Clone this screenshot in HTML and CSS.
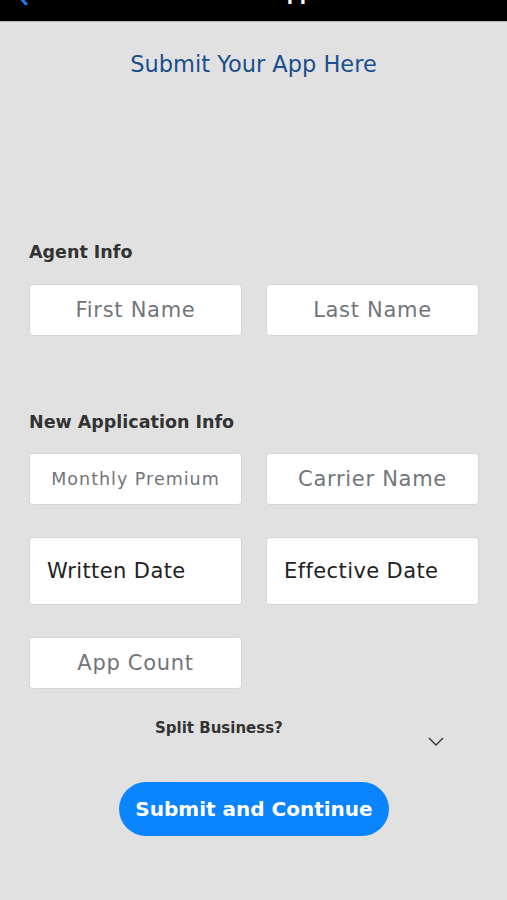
FILE: index.html
```html
<!DOCTYPE html>
<html lang="en">
<head>
  <meta charset="UTF-8">
  <meta name="viewport" content="width=device-width, initial-scale=1.0">
  <title>Submit App</title>
  <link rel="stylesheet" href="styles.css">
</head>
<body>

  <div class="topbar">
    <div class="topbar-left">
      <svg class="back-icon" width="14" height="24" viewBox="0 0 14 24">
        <path d="M12 2 L3 12 L12 22" fill="none" stroke="#1a7cf0" stroke-width="3" stroke-linecap="round" stroke-linejoin="round"/>
      </svg>
    </div>
    <div class="nav-title">Submit App</div>
    <div></div>
  </div>

  <h1 class="page-title">Submit Your App Here</h1>

  <form class="form" onsubmit="return false">
    <!-- agent -->
    <div class="section-label agent-label">Agent Info</div>
    <div class="row">
      <input class="field" type="text" placeholder="First Name">
      <input class="field" type="text" placeholder="Last Name">
    </div>

    <!-- application -->
    <div class="section-label app-label">New Application Info</div>
    <div class="row">
      <input class="field small" type="text" placeholder="Monthly Premium">
      <input class="field" type="text" placeholder="Carrier Name">
    </div>
    <div class="row">
      <div class="field date">Written Date</div>
      <div class="field date">Effective Date</div>
    </div>
    <div class="row">
      <input class="field" type="text" placeholder="App Count">
    </div>

    <div class="split">
      <span class="split-label">Split Business?</span>
      <svg class="chevron" width="16" height="9" viewBox="0 0 16 9">
        <path d="M1 1 L8 8 L15 1" fill="none" stroke="#333" stroke-width="1.4"/>
      </svg>
    </div>

    <button class="submit-btn" type="submit">Submit and Continue</button>
  </form>

</body>
</html>
```

FILE: styles.css
```css
body {
  margin: 0;
  background: #e1e1e1;
  font-family: 'DejaVu Sans', 'Liberation Sans', sans-serif;
  color: #333;
}

/* nav bar, only the bottom edge is on screen */
.topbar {
  height: 21px;
  background: #000;
  border-bottom: 1px solid #b4b4b4;
  overflow: hidden;
  display: grid;
  grid-template-columns: 1fr auto 1fr;
  align-items: start;
}

.back-icon {
  display: block;
  margin-left: 14px;
  margin-top: -18px;
}

.nav-title {
  color: #fff;
  font-size: 18px;
  font-weight: bold;
  line-height: 18px;
  margin-top: -15px;
}

.page-title {
  margin: 0;
  padding-top: 30px;
  font-size: 22.5px;
  line-height: 24px;
  font-weight: normal;
  text-align: center;
  color: #1b4f8c;
}

.form {
  padding: 0 28px 0 29px;
  display: flex;
  flex-direction: column;
}

.section-label {
  font-size: 17.5px;
  line-height: 20px;
  font-weight: bold;
  color: #333;
}

.agent-label {
  margin-top: 166px;
}

.app-label {
  margin-top: 76px;
}

.row {
  display: grid;
  grid-template-columns: 1fr 1fr;
  gap: 24px;
  margin-top: 32px;
}

.agent-label + .row {
  margin-top: 22px;
}

.app-label + .row {
  margin-top: 21px;
}

.field {
  box-sizing: border-box;
  height: 52px;
  width: 100%;
  background: #fff;
  border: 1px solid #d6d6d6;
  border-radius: 4px;
  font-family: inherit;
  font-size: 21px;
  letter-spacing: 0.7px;
  text-align: center;
  color: #222;
  outline: none;
}

.field::placeholder {
  color: #72757a;
}

.field.small {
  font-size: 17.5px;
  letter-spacing: 1px;
}

.field.date {
  height: 68px;
  display: flex;
  align-items: center;
  padding-left: 17px;
  font-size: 21px;
  letter-spacing: 0.4px;
  color: #222;
  text-align: left;
}

.split {
  display: flex;
  align-items: flex-start;
  margin-top: 30px;
}

.split-label {
  margin-left: 126px;
  font-size: 15px;
  line-height: 18px;
  font-weight: bold;
  color: #333;
}

.chevron {
  margin-left: auto;
  margin-right: 35px;
  margin-top: 18px;
}

.submit-btn {
  align-self: center;
  margin-top: 36px;
  width: 270px;
  height: 54px;
  border: none;
  border-radius: 27px;
  background: #0a84ff;
  color: #fff;
  font-family: inherit;
  font-size: 20px;
  font-weight: bold;
  cursor: pointer;
}
```
